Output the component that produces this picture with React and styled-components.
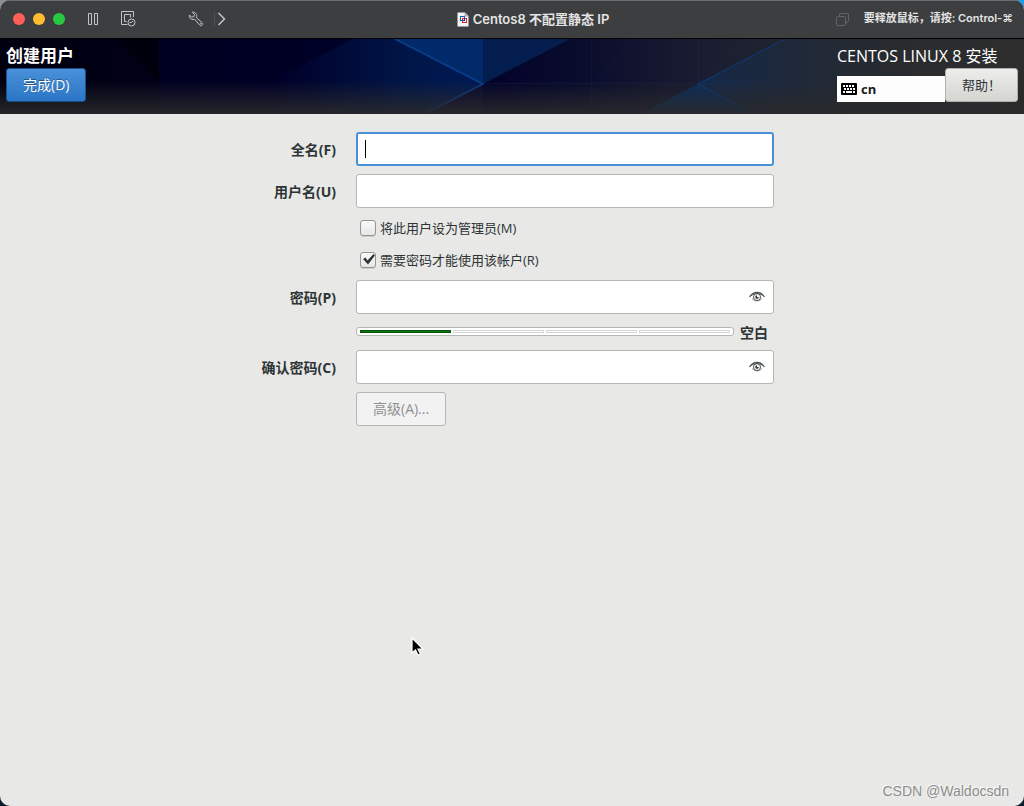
import React, { useState } from 'react';
import styled, { createGlobalStyle } from 'styled-components';

const uiFont = `'Open Sans', 'Noto Sans CJK SC', sans-serif`;
const macFont = `Inter, 'Noto Sans CJK SC', sans-serif`;

const GlobalStyle = createGlobalStyle`
    * {
        box-sizing: border-box;
    }
    body {
        margin: 0;
        background: linear-gradient(90deg, #8a9096, #1d9bea) top / 100% 50% no-repeat #0b1c2e;
    }
    button, input {
        font-family: inherit;
        margin: 0;
    }
`;

const Window = styled.div`
    position: relative;
    display: flex;
    flex-direction: column;
    min-height: 100vh;
    overflow: hidden;
    border-radius: 10px;
    background: #e8e8e6;
    color: #2e3436;
    font-family: ${uiFont};
    font-size: 13px;
`;

const TitleBar = styled.header`
    display: grid;
    grid-template-columns: 1fr auto 1fr;
    align-items: center;
    height: 39px;
    padding: 0 11px 1px 13px;
    background: #3c3e3f;
    border-top: 1px solid #6b6d6e;
    border-bottom: 1px solid #000;
    color: #e4e4e4;
    font-family: ${macFont};
`;

const BarGroup = styled.div`
    display: flex;
    align-items: center;
    justify-content: ${({ $end }) => ($end ? 'flex-end' : 'flex-start')};
`;

const Lights = styled.div`
    display: flex;
    gap: 8px;
    margin-right: 22px;
`;

const Light = styled.button`
    width: 12px;
    height: 12px;
    padding: 0;
    border: none;
    border-radius: 50%;
    background: ${({ $color }) => $color};
`;

const BarButton = styled.button`
    display: flex;
    padding: 0;
    border: none;
    background: none;
    color: #c3c4c4;
    margin-right: ${({ $gap = 0 }) => $gap}px;
`;

const Divider = styled.span`
    width: 1px;
    height: 14px;
    margin-right: 2px;
    background: #4e5051;
`;

const WindowTitle = styled.h1`
    display: flex;
    align-items: center;
    gap: 4px;
    margin: 0 0 0 40px;
    font-size: 13px;
    line-height: 18px;
    font-weight: 600;
    white-space: nowrap;
`;

const ReleaseHint = styled.span`
    margin-left: 15px;
    padding-bottom: 2px;
    font-size: 11px;
    font-weight: 600;
    line-height: 16px;
    white-space: nowrap;
`;

const Banner = styled.div`
    position: relative;
    display: flex;
    justify-content: space-between;
    padding: 5px 6px 12px;
    background: #00001c;
`;

const BannerArt = styled.svg`
    position: absolute;
    inset: 0;
    width: 100%;
    height: 100%;
`;

const BannerSide = styled.div`
    position: relative;
    display: flex;
    flex-direction: column;
    align-items: ${({ $wide }) => ($wide ? 'stretch' : 'flex-start')};
    width: ${({ $wide }) => ($wide ? '181px' : 'auto')};
`;

const SpokeTitle = styled.h2`
    margin: 0;
    color: #fff;
    font-size: ${({ $light }) => ($light ? 16 : 17)}px;
    font-weight: ${({ $light }) => ($light ? 400 : 700)};
    line-height: 24px;
    white-space: nowrap;
`;

const BannerTools = styled.div`
    display: flex;
    align-items: flex-end;
`;

const Layout = styled.div`
    display: flex;
    flex: 1;
    align-items: center;
    gap: 4px;
    height: 26px;
    padding-left: 4px;
    background: #fdfdfd;
    color: #1a1a1a;
    font-weight: 700;
`;

const Button = styled.button`
    height: 34px;
    padding: 0 16px;
    border: 1px solid #b0b0ad;
    border-radius: 3px;
    background: linear-gradient(#ededeb, #d4d4d1);
    color: #2e3436;
    font-size: ${({ $small }) => ($small ? 13 : 14)}px;
    line-height: 20px;
    white-space: nowrap;

    &:disabled {
        background: #f2f2f2;
        border-color: #b6b6b3;
        color: #8d9091;
    }
`;

const DoneButton = styled(Button)`
    border-color: #1c5187;
    background: linear-gradient(#4a90d9, #2a76c6);
    color: #fff;
    text-shadow: 0 -1px rgba(0, 0, 0, 0.4);
`;

const Form = styled.form`
    display: grid;
    grid-template-columns: 76px minmax(0, 418px);
    justify-content: center;
    align-items: center;
    gap: 8px 20px;
    padding: 18px 0 18px 10px;
`;

const Label = styled.label`
    justify-self: end;
    padding-top: 2px;
    font-size: 14px;
    font-weight: 700;
    line-height: 20px;
    white-space: nowrap;
`;

const InputBox = styled.div`
    position: relative;
    display: flex;
`;

const Input = styled.input`
    width: 100%;
    height: 34px;
    padding: 0 ${({ $icon }) => ($icon ? 32 : 8)}px 0 8px;
    border: 1px solid #b6b6b3;
    border-radius: 3px;
    background: #fff;
    color: #2e3436;
    font-size: 14px;
    outline: none;
    ${({ $active }) => $active && `
        border: 2px solid #4a90d9;
        caret-color: transparent;
    `}
`;

const Caret = styled.span`
    position: absolute;
    left: 9px;
    top: 8px;
    width: 1px;
    height: 18px;
    background: #000;
`;

const RevealButton = styled.button`
    position: absolute;
    right: 8px;
    top: 8px;
    display: flex;
    padding: 0;
    border: none;
    background: none;
`;

const CheckRow = styled.label`
    grid-column: 2;
    display: flex;
    align-items: center;
    gap: 4px;
    height: 24px;
    padding-left: 4px;
    line-height: 20px;
    white-space: nowrap;
`;

const CheckWrap = styled.span`
    position: relative;
    display: flex;
`;

const CheckBox = styled.input`
    appearance: none;
    width: 16px;
    height: 16px;
    border: 1px solid #949694;
    border-radius: 3px;
    background: linear-gradient(#fbfbfb, #e6e6e5);
    box-shadow: 0 1px rgba(0, 0, 0, 0.12);
`;

const Tick = styled.svg`
    position: absolute;
    left: 2px;
    top: 1px;
    pointer-events: none;
`;

const StrengthRow = styled.div`
    grid-column: 2;
    display: flex;
    align-items: center;
    gap: 6px;
    height: 20px;
`;

const Meter = styled.div`
    display: flex;
    flex: 1;
    gap: 2px;
    margin-bottom: 1px;
    padding: 2px 3px;
    border: 1px solid #b6b6b3;
    border-radius: 3px;
    background: #fff;
`;

const Segment = styled.span`
    flex: 1;
    height: 3px;
    border: 1px solid ${({ $on }) => ($on ? '#0c4d10' : '#d6d6d4')};
    background: ${({ $on }) => ($on ? '#087a08' : '#fff')};
`;

const StrengthText = styled.span`
    width: 34px;
    padding-top: 2px;
    font-size: 14px;
    font-weight: 700;
    line-height: 20px;
`;

const FormButton = styled(Button)`
    grid-column: 2;
    justify-self: start;
`;

const Pointer = styled.svg`
    position: absolute;
    left: 410px;
    top: 636px;
`;

const Watermark = styled.span`
    position: absolute;
    right: 15px;
    bottom: 5px;
    color: #8e8e8d;
    font-family: 'Liberation Sans', Arial, sans-serif;
    font-size: 14px;
    line-height: 20px;
    text-shadow: -1px -1px #fafafa;
`;

const PauseIcon = () => (
    <svg width="12" height="14" viewBox="0 0 12 14" fill="none" stroke="currentColor">
        <path d="M1.5 1.5h3v11h-3zM7.5 1.5h3v11h-3z" />
    </svg>
);

const SnapshotIcon = () => (
    <svg width="15" height="16" viewBox="0 0 15 16" fill="none" stroke="currentColor">
        <path d="M6.5 13.5h-6V.5h12v5.5M5.5 10.5h-2v-7h6v3" />
        <circle cx="10.5" cy="11.5" r="3.5" />
        <path d="M8.5 11.5h2l1.5-1.5" />
    </svg>
);

const WrenchIcon = () => (
    <svg width="16" height="16" viewBox="0 0 16 16" fill="none" stroke="currentColor" strokeLinejoin="round">
        <path d="M4.3 1.1 6.5 3.5 6 5.6 3.9 6.1 1.3 4.2C1 6.5 2.6 8.7 5.2 8.5L6.7 8.3 11.6 14C12.3 14.9 13.5 15 14.2 14.2 15 13.4 14.8 12.3 14 11.6L8.4 6.7C9.5 3.4 7.3.8 4.3 1.1Z" />
        <circle cx="12.8" cy="12.8" r=".4" />
    </svg>
);

const ChevronIcon = () => (
    <svg width="9" height="14" viewBox="0 0 9 14" fill="none" stroke="currentColor" strokeWidth="1.5">
        <path d="M1.5 1 7.5 7l-6 6" />
    </svg>
);

const DocIcon = () => (
    <svg width="12" height="15" viewBox="0 0 12 15" fill="none">
        <path d="M.5 .5H8L11.5 4V14.5H.5Z" fill="#f4f4f4" />
        <path d="M8 .5V4h3.5" fill="#c4c4c4" stroke="#777" strokeWidth=".5" />
        <rect x="3.5" y="4.5" width="4" height="4" stroke="#1f5faf" />
        <rect x="5.5" y="6.5" width="4" height="4" stroke="#e3242b" />
        <path d="M5 8.5h2.5V6" stroke="#1f3f8f" />
    </svg>
);

const CopiesIcon = () => (
    <svg width="13" height="13" viewBox="0 0 13 13" fill="none" stroke="#626465">
        <rect x=".5" y="3.5" width="9" height="9" rx="1.5" />
        <path d="M3.5 3.5V2Q3.5.5 5 .5h6Q12.5.5 12.5 2v5.5Q12.5 9 11 9.5H9.5" />
    </svg>
);

const KeyboardIcon = () => (
    <svg width="16" height="12" viewBox="0 0 16 12">
        <rect width="16" height="12" rx="1" fill="#000" />
        <path
            d="M2 2h2v2H2zM5 2h2v2H5zM8 2h2v2H8zM11 2h2v2h-2zM3 5h2v2H3zM6 5h2v2H6zM9 5h2v2H9zM12 5h2v2h-2zM2 8h2v2H2zM5 8h6v2H5zM12 8h2v2h-2z"
            fill="#fff"
        />
    </svg>
);

const EyeIcon = () => (
    <svg width="18" height="18" viewBox="0 0 18 18" fill="none" stroke="#4c5254">
        <path d="M1.5 9Q4.5 4.5 9 4.5T16.5 9" strokeWidth="1.3" />
        <path d="M3 7.5Q6 5.8 9 5.8T15 7.5" strokeWidth=".7" />
        <circle cx="9" cy="9" r="3.5" />
        <path d="M9 7.3a1.8 1.8 0 1 0 1.8 1.8L9 9Z" fill="#33393b" stroke="none" />
        <path d="M4 10.5Q6 13 9 13T14 10.5" strokeWidth=".6" />
    </svg>
);

const BannerBackdrop = () => (
    <BannerArt viewBox="0 0 1024 75" preserveAspectRatio="none" aria-hidden="true">
        <defs>
            <linearGradient id="base">
                <stop offset="0" stopColor="#00000f" />
                <stop offset=".15" stopColor="#000018" />
                <stop offset=".27" stopColor="#000028" />
                <stop offset=".4" stopColor="#001648" />
                <stop offset=".47" stopColor="#001a55" />
                <stop offset=".472" stopColor="#02022a" />
                <stop offset=".56" stopColor="#090b2c" />
                <stop offset=".68" stopColor="#191c30" />
                <stop offset=".8" stopColor="#222831" />
                <stop offset=".9" stopColor="#2a2c2e" />
                <stop offset="1" stopColor="#2d2d2d" />
            </linearGradient>
            <linearGradient id="glow" gradientUnits="userSpaceOnUse" x1="698" y1="0" x2="920" y2="0">
                <stop offset="0" stopColor="#122c52" />
                <stop offset="1" stopColor="#2a2c2e" stopOpacity="0" />
            </linearGradient>
            <linearGradient id="shade" x2="0" y2="1">
                <stop offset=".55" stopColor="#29292b" stopOpacity="0" />
                <stop offset="1" stopColor="#29292b" stopOpacity=".93" />
            </linearGradient>
        </defs>
        <rect width="1024" height="75" fill="url(#base)" />
        <path d="M115 0h44v44z" fill="#00000c" />
        <path d="M266 45 352 0H159v75h50z" fill="#000024" opacity=".8" />
        <path d="M395 0h88v45z" fill="#002a6a" />
        <path d="M483 0h87L483 45z" fill="#031e4e" />
        <path d="M483 45 425 75h58z" fill="#080830" />
        <path d="M698 45 785 0h120v75H752z" fill="url(#glow)" opacity=".8" />
        <path d="M640 75 698 45 755 75z" fill="#0b2d58" />
        <g fill="none" stroke="#0b4796">
            <path d="M395 0 483 45 425 75" strokeWidth="1.5" opacity=".85" />
            <path d="M785 0 698 45 755 75" opacity=".65" />
            <path d="M483 44.5h325M591.5 0v75M698.5 0v75M591 45 635 0M698 45 745 0M591 45l28 30M483 45l28 30" opacity=".16" />
        </g>
        <rect width="1024" height="75" fill="url(#shade)" />
    </BannerArt>
);

const Field = ({ id, label, reveal, active, ...otherProps }) => (
    <>
        <Label htmlFor={id}>{label}</Label>
        <InputBox>
            <Input id={id} $icon={reveal} $active={active} {...otherProps} />
            {active && <Caret />}
            {reveal && (
                <RevealButton type="button" aria-label="显示密码">
                    <EyeIcon />
                </RevealButton>
            )}
        </InputBox>
    </>
);

const Check = ({ text, checked, onChange }) => (
    <CheckRow>
        <CheckWrap>
            <CheckBox type="checkbox" checked={checked} onChange={onChange} />
            {checked && (
                <Tick width="14" height="13" viewBox="0 0 14 13">
                    <path d="M1 6 3.5 4.5 5.500 7.5 11.5 1 13 2.5 6 11.5Z" fill="#2e3436" />
                </Tick>
            )}
        </CheckWrap>
        {text}
    </CheckRow>
);

const App = () => {
    const [admin, setAdmin] = useState(false);
    const [needPassword, setNeedPassword] = useState(true);

    return (
        <Window>
            <GlobalStyle />
            <TitleBar>
                <BarGroup>
                    <Lights>
                        <Light $color="#ff5f57" aria-label="关闭" />
                        <Light $color="#febc2e" aria-label="最小化" />
                        <Light $color="#28c840" aria-label="缩放" />
                    </Lights>
                    <BarButton $gap={22} aria-label="暂停"><PauseIcon /></BarButton>
                    <BarButton $gap={52} aria-label="快照"><SnapshotIcon /></BarButton>
                    <BarButton $gap={10} aria-label="设置"><WrenchIcon /></BarButton>
                    <Divider />
                    <BarButton aria-label="更多"><ChevronIcon /></BarButton>
                </BarGroup>
                <WindowTitle>
                    <DocIcon />
                    Centos8 不配置静态 IP
                </WindowTitle>
                <BarGroup $end>
                    <CopiesIcon />
                    <ReleaseHint>要释放鼠标，请按: Control-⌘</ReleaseHint>
                </BarGroup>
            </TitleBar>

            <Banner>
                <BannerBackdrop />
                <BannerSide>
                    <SpokeTitle>创建用户</SpokeTitle>
                    <DoneButton type="button">完成(D)</DoneButton>
                </BannerSide>
                <BannerSide $wide>
                    <SpokeTitle $light>CENTOS LINUX 8 安装</SpokeTitle>
                    <BannerTools>
                        <Layout><KeyboardIcon />cn</Layout>
                        <Button type="button" $small>帮助！</Button>
                    </BannerTools>
                </BannerSide>
            </Banner>

            <Form>
                <Field id="fullname" label="全名(F)" type="text" active />
                <Field id="username" label="用户名(U)" type="text" />
                <Check
                    text="将此用户设为管理员(M)"
                    checked={admin}
                    onChange={(e) => setAdmin(e.target.checked)}
                />
                <Check
                    text="需要密码才能使用该帐户(R)"
                    checked={needPassword}
                    onChange={(e) => setNeedPassword(e.target.checked)}
                />
                <Field id="password" label="密码(P)" type="password" reveal />
                <StrengthRow>
                    <Meter role="meter" aria-label="密码强度" aria-valuemin={0} aria-valuemax={4} aria-valuenow={1}>
                        {[1, 2, 3, 4].map((n) => <Segment key={n} $on={n === 1} />)}
                    </Meter>
                    <StrengthText>空白</StrengthText>
                </StrengthRow>
                <Field id="confirm" label="确认密码(C)" type="password" reveal />
                <FormButton type="button" disabled>高级(A)...</FormButton>
            </Form>

            <Pointer width="16" height="22" viewBox="0 0 16 22">
                <path d="M2 2v15l3.5-3L8 19l2.5-1-2.5-5h5Z" fill="#000" stroke="#fff" strokeWidth="1.2" />
            </Pointer>
            <Watermark>CSDN @Waldocsdn</Watermark>
        </Window>
    );
};

export default App;
